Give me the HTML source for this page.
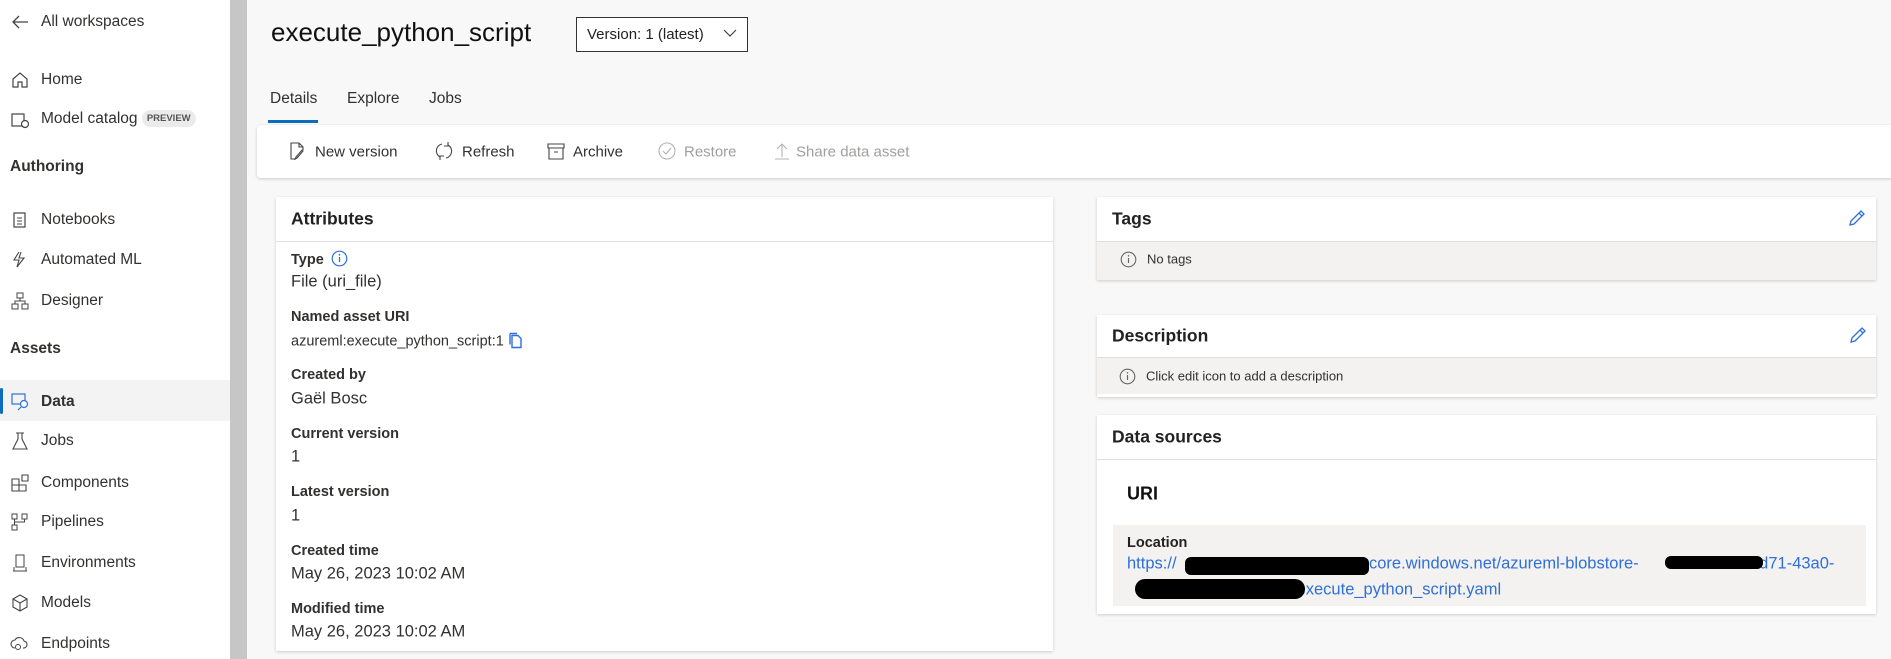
<!DOCTYPE html>
<html><head><meta charset="utf-8"><style>
*{margin:0;padding:0;box-sizing:border-box}
body{width:1891px;height:659px;overflow:hidden;background:#f8f8f8;font-family:"Liberation Sans",sans-serif;color:#323130;position:relative}
.a{position:absolute;white-space:nowrap}
.side{position:absolute;left:0;top:0;width:230px;height:659px;background:#fff}
.bar{position:absolute;left:230px;top:0;width:17px;height:659px;background:#c6c6c6}
.ni{position:absolute;left:41px;font-size:15.5px;transform:translateY(-50%)}
.ic{position:absolute;left:10px;width:20px;height:20px;transform:translateY(-50%)}
.hd{position:absolute;left:10px;font-size:15.5px;font-weight:bold;transform:translateY(-50%)}
.card{position:absolute;background:#fff;box-shadow:0 1px 3px rgba(0,0,0,.18)}
.lbl{position:absolute;left:15px;font-size:14.5px;font-weight:bold;color:#323130;transform:translateY(-50%)}
.val{position:absolute;left:15px;font-size:16.5px;transform:translateY(-50%)}
.ti{position:absolute;font-size:15px;transform:translateY(-50%)}
.link{color:#2f6fd8;font-size:16.5px}
.blk{position:absolute;background:#000;border-radius:6px}
</style></head><body>
<div class="side">
<svg class="ic" style="top:22px" viewBox="0 0 20 20"><path d="M18 10H3M9 4L3 10l6 6" fill="none" stroke="#444" stroke-width="1.3"/></svg>
<div class="ni" style="top:22px">All workspaces</div>
<svg class="ic" style="top:80px" viewBox="0 0 20 20"><path d="M3 9l7-6 7 6v8h-5v-5H8v5H3z" fill="none" stroke="#444" stroke-width="1.2"/></svg>
<div class="ni" style="top:80px">Home</div>
<svg class="ic" style="top:120px" viewBox="0 0 20 20"><rect x="2" y="4" width="12" height="12" fill="none" stroke="#444" stroke-width="1.2"/><circle cx="15" cy="14" r="3.5" fill="#fff" stroke="#444" stroke-width="1.2"/></svg>
<div class="ni" style="top:119px">Model catalog <span style="font-size:9.5px;background:#ebebeb;color:#555;padding:3px 5px;border-radius:9px;font-weight:bold;vertical-align:2px">PREVIEW</span></div>
<div class="hd" style="top:167px">Authoring</div>
<svg class="ic" style="top:220px" viewBox="0 0 20 20"><rect x="4" y="3" width="11" height="14" fill="none" stroke="#444" stroke-width="1.2"/><path d="M7 8h5M7 11h5M7 14h5" stroke="#444"/></svg>
<div class="ni" style="top:220px">Notebooks</div>
<svg class="ic" style="top:260px" viewBox="0 0 20 20"><path d="M9 2L4 10h5l-2 7 7-9H9l2-6" fill="none" stroke="#444" stroke-width="1.1"/></svg>
<div class="ni" style="top:260px">Automated ML</div>
<svg class="ic" style="top:301px" viewBox="0 0 20 20"><rect x="7" y="2" width="6" height="5" fill="none" stroke="#444"/><rect x="2" y="13" width="6" height="5" fill="none" stroke="#444"/><rect x="12" y="13" width="6" height="5" fill="none" stroke="#444"/><path d="M10 7v3M5 13v-3h10v3" fill="none" stroke="#444"/></svg>
<div class="ni" style="top:301px">Designer</div>
<div class="hd" style="top:349px">Assets</div>
<div style="position:absolute;left:0;top:380px;width:230px;height:41px;background:#f3f3f3"></div>
<div style="position:absolute;left:0;top:388px;width:3px;height:26px;background:#0f6cbd;border-radius:2px"></div>
<svg class="ic" style="top:401px" viewBox="0 0 20 20"><rect x="2" y="3" width="13" height="10" fill="none" stroke="#2f6fd8" stroke-width="1.2"/><circle cx="14" cy="13" r="3.5" fill="#fff" stroke="#2f6fd8" stroke-width="1.2"/><path d="M11 16l-3 3" stroke="#2f6fd8" stroke-width="1.2"/></svg>
<div class="ni" style="top:402px;font-weight:bold">Data</div>
<svg class="ic" style="top:441px" viewBox="0 0 20 20"><path d="M8 2v6L3 18h14L12 8V2M6 2h8" fill="none" stroke="#444" stroke-width="1.1"/></svg>
<div class="ni" style="top:441px">Jobs</div>
<svg class="ic" style="top:483px" viewBox="0 0 20 20"><path d="M2 6h7v12H2zM2 12h14v6H9M12 2h6v6h-6z" fill="none" stroke="#444" stroke-width="1.1"/></svg>
<div class="ni" style="top:483px">Components</div>
<svg class="ic" style="top:522px" viewBox="0 0 20 20"><rect x="2" y="2" width="5" height="5" fill="none" stroke="#444"/><rect x="12" y="2" width="5" height="5" fill="none" stroke="#444"/><rect x="2" y="13" width="5" height="5" fill="none" stroke="#444"/><path d="M4.5 7v6M14.5 7v3h-10" fill="none" stroke="#444"/></svg>
<div class="ni" style="top:522px">Pipelines</div>
<svg class="ic" style="top:563px" viewBox="0 0 20 20"><rect x="6" y="2" width="8" height="12" fill="none" stroke="#444"/><path d="M3 18h14M4 14v4M16 14v4" stroke="#444"/></svg>
<div class="ni" style="top:563px">Environments</div>
<svg class="ic" style="top:603px" viewBox="0 0 20 20"><path d="M10 2l7 4v8l-7 4-7-4V6zM3 6l7 4 7-4M10 10v8" fill="none" stroke="#444" stroke-width="1.1"/></svg>
<div class="ni" style="top:603px">Models</div>
<svg class="ic" style="top:644px" viewBox="0 0 20 20"><path d="M5 14a4 4 0 010-8 5 5 0 019 1 3.5 3.5 0 01-1 7" fill="none" stroke="#444" stroke-width="1.1"/><circle cx="8" cy="13" r="2.5" fill="none" stroke="#444"/></svg>
<div class="ni" style="top:644px">Endpoints</div>
</div>
<div class="bar"></div>

<div class="a" style="left:271px;top:17px;font-size:26px;color:#111">execute_python_script</div>
<div class="a" style="left:576px;top:17px;width:172px;height:35px;border:1px solid #333;background:#fff;font-size:15px;padding:8px 0 0 10px;color:#222">Version: 1 (latest)
<svg style="position:absolute;right:10px;top:10px" width="14" height="10" viewBox="0 0 14 10"><path d="M1 2l6 6 6-6" fill="none" stroke="#444" stroke-width="1.2"/></svg></div>

<div class="a" style="left:270px;top:90px;font-size:15.5px">Details</div>
<div class="a" style="left:347px;top:90px;font-size:15.5px">Explore</div>
<div class="a" style="left:429px;top:90px;font-size:15.5px">Jobs</div>
<div class="a" style="left:268px;top:120px;width:50px;height:3px;background:#0f6cbd"></div>

<div class="card" style="left:257px;top:125px;width:1640px;height:53px;border-radius:4px 0 0 4px"></div>
<svg class="a" style="left:287px;top:141px" width="20" height="20" viewBox="0 0 20 20"><path d="M12 2H4v16h5M12 2l4 4v3M12 2v4h4M16 10l-6 7-2 1 1-2 6-7z" fill="none" stroke="#444" stroke-width="1.1"/></svg>
<div class="ti" style="left:315px;top:152px">New version</div>
<svg class="a" style="left:434px;top:141px" width="20" height="20" viewBox="0 0 20 20"><path d="M14 4a7 7 0 01-2 13M6 16a7 7 0 012-13M14 1v4h-4M6 19v-4h4" fill="none" stroke="#444" stroke-width="1.1"/></svg>
<div class="ti" style="left:462px;top:152px">Refresh</div>
<svg class="a" style="left:546px;top:141px" width="20" height="20" viewBox="0 0 20 20"><path d="M2 3h16v4H2zM3 7v11h14V7M8 11h4" fill="none" stroke="#444" stroke-width="1.1"/></svg>
<div class="ti" style="left:573px;top:152px">Archive</div>
<svg class="a" style="left:657px;top:141px" width="20" height="20" viewBox="0 0 20 20"><circle cx="10" cy="10" r="8" fill="none" stroke="#b5b3b1" stroke-width="1.1"/><path d="M6 10l3 3 5-6" fill="none" stroke="#b5b3b1" stroke-width="1.1"/></svg>
<div class="ti" style="left:684px;top:152px;color:#a19f9d">Restore</div>
<svg class="a" style="left:772px;top:141px" width="20" height="20" viewBox="0 0 20 20"><path d="M10 16V3M5 8l5-5 5 5M3 18h14" fill="none" stroke="#b5b3b1" stroke-width="1.1"/></svg>
<div class="ti" style="left:796px;top:152px;color:#a19f9d">Share data asset</div>

<div class="card" style="left:276px;top:197px;width:777px;height:454px">
<div class="a" style="left:15px;top:22px;transform:translateY(-50%);font-size:17.5px;font-weight:bold;color:#222">Attributes</div>
<div class="a" style="left:0;top:44px;width:777px;height:1px;background:#e1dfdd"></div>
<div class="lbl" style="top:62px">Type <svg width="17" height="17" viewBox="0 0 17 17" style="vertical-align:-3px;margin-left:3px"><circle cx="8.5" cy="8.5" r="7.3" fill="none" stroke="#2f6fd8" stroke-width="1.2"/><path d="M8.5 7v5" stroke="#2f6fd8" stroke-width="1.3"/><circle cx="8.5" cy="4.8" r=".9" fill="#2f6fd8"/></svg></div>
<div class="val" style="top:85px">File (uri_file)</div>
<div class="lbl" style="top:120px">Named asset URI</div>
<div class="val" style="top:144px;font-size:14.5px">azureml:execute_python_script:1 <svg width="14" height="16" viewBox="0 0 14 16" style="vertical-align:-3px"><path d="M4 3h6l3 3v9H4zM2 1h7M2 1v11" fill="none" stroke="#2f6fd8" stroke-width="1.4"/></svg></div>
<div class="lbl" style="top:178px">Created by</div>
<div class="val" style="top:202px">Gaël Bosc</div>
<div class="lbl" style="top:237px">Current version</div>
<div class="val" style="top:260px">1</div>
<div class="lbl" style="top:295px">Latest version</div>
<div class="val" style="top:319px">1</div>
<div class="lbl" style="top:354px">Created time</div>
<div class="val" style="top:377px">May 26, 2023 10:02 AM</div>
<div class="lbl" style="top:412px">Modified time</div>
<div class="val" style="top:435px">May 26, 2023 10:02 AM</div>
</div>

<div class="card" style="left:1097px;top:197px;width:779px;height:83px">
<div class="a" style="left:15px;top:22px;transform:translateY(-50%);font-size:17.5px;font-weight:bold;color:#222">Tags</div>
<svg class="a" style="left:750px;top:11px" width="20" height="20" viewBox="0 0 20 20"><path d="M3 17l1-4 10-10 3 3-10 10zM12 5l3 3" fill="none" stroke="#2f6fd8" stroke-width="1.3"/></svg>
<div class="a" style="left:0;top:44px;width:779px;height:39px;background:#f3f2f1;border-top:1px solid #e1dfdd"></div>
<svg class="a" style="left:23px;top:54px" width="17" height="17" viewBox="0 0 17 17"><circle cx="8.5" cy="8.5" r="7.3" fill="none" stroke="#666" stroke-width="1.1"/><path d="M8.5 7v5" stroke="#666" stroke-width="1.2"/><circle cx="8.5" cy="4.8" r=".8" fill="#666"/></svg>
<div class="a" style="left:50px;top:62px;transform:translateY(-50%);font-size:13px">No tags</div>
</div>

<div class="card" style="left:1097px;top:315px;width:779px;height:82px">
<div class="a" style="left:15px;top:21px;transform:translateY(-50%);font-size:17.5px;font-weight:bold;color:#222">Description</div>
<svg class="a" style="left:751px;top:10px" width="20" height="20" viewBox="0 0 20 20"><path d="M3 17l1-4 10-10 3 3-10 10zM12 5l3 3" fill="none" stroke="#2f6fd8" stroke-width="1.3"/></svg>
<div class="a" style="left:0;top:42px;width:779px;height:37px;background:#f3f2f1;border-top:1px solid #e1dfdd"></div>
<svg class="a" style="left:22px;top:53px" width="17" height="17" viewBox="0 0 17 17"><circle cx="8.5" cy="8.5" r="7.3" fill="none" stroke="#666" stroke-width="1.1"/><path d="M8.5 7v5" stroke="#666" stroke-width="1.2"/><circle cx="8.5" cy="4.8" r=".8" fill="#666"/></svg>
<div class="a" style="left:49px;top:61px;transform:translateY(-50%);font-size:13px">Click edit icon to add a description</div>
</div>

<div class="card" style="left:1097px;top:415px;width:779px;height:199px">
<div class="a" style="left:15px;top:22px;transform:translateY(-50%);font-size:17.5px;font-weight:bold;color:#222">Data sources</div>
<div class="a" style="left:0;top:44px;width:779px;height:1px;background:#e1dfdd"></div>
<div class="a" style="left:30px;top:79px;transform:translateY(-50%);font-size:18px;font-weight:bold;color:#111">URI</div>
<div class="a" style="left:16px;top:110px;width:753px;height:81px;background:#f3f2f1"></div>
<div class="a" style="left:30px;top:128px;transform:translateY(-50%);font-size:14.5px;font-weight:bold;color:#222">Location</div>
<div class="a link" style="left:30px;top:149px;transform:translateY(-50%)">https://</div>
<div class="a link" style="left:272px;top:149px;transform:translateY(-50%)">core.windows.net/azureml-blobstore-</div>
<div class="a link" style="left:653px;top:149px;transform:translateY(-50%)">ad71-43a0-</div>
<div class="a link" style="left:195px;top:175px;transform:translateY(-50%)">/execute_python_script.yaml</div>
<div class="blk" style="left:88px;top:142px;width:184px;height:18px"></div>
<div class="blk" style="left:568px;top:141px;width:98px;height:13px"></div>
<div class="blk" style="left:38px;top:164px;width:170px;height:20px;border-radius:10px"></div>
</div>
</body></html>
